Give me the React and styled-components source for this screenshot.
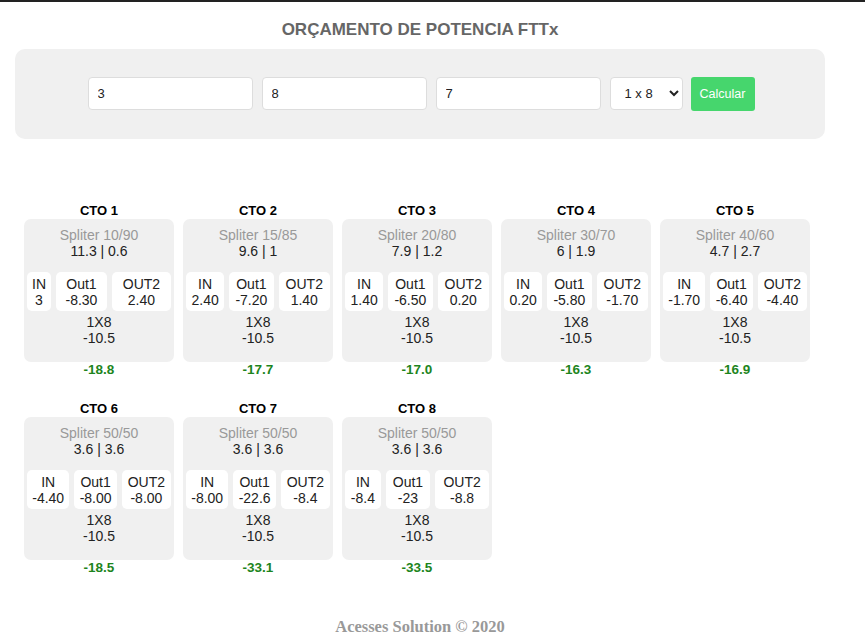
import React from 'react';
import styled, { createGlobalStyle } from 'styled-components';

const GlobalStyle = createGlobalStyle`
  body {
    margin: 0;
    border-top: 2px solid #222;
    background: #fff;
    font-family: "Liberation Sans", Arial, sans-serif;
    color: #222;
  }
`;

const Page = styled.div`
  padding: 0 40px 0 15px;
`;

const Title = styled.h2`
  margin: 0;
  padding: 18px 0 9px;
  font-size: 17px;
  line-height: 20px;
  font-weight: bold;
  color: #666;
  text-align: center;
`;

const Panel = styled.div`
  display: flex;
  justify-content: center;
  gap: 9px;
  padding: 28px 0 28px 2px;
  background: #f0f0f0;
  border-radius: 10px;
`;

const Field = styled.input`
  box-sizing: border-box;
  width: 165px;
  height: 33px;
  padding: 0 9px;
  border: 1px solid #ddd;
  border-radius: 4px;
  background: #fff;
  font-family: "Liberation Sans", Arial, sans-serif;
  font-size: 13px;
  color: #222;
  outline: none;
`;

const Select = styled.select`
  box-sizing: border-box;
  width: 73px;
  height: 33px;
  padding: 0 6px 0 10px;
  border: 1px solid #ddd;
  border-radius: 4px;
  background: #fff;
  font-family: "Liberation Sans", Arial, sans-serif;
  font-size: 13px;
  color: #222;
`;

const Button = styled.button`
  width: 64px;
  height: 34px;
  margin-left: -1px;
  border: none;
  border-radius: 3px;
  background: #46d66d;
  color: #fff;
  font-family: "Liberation Sans", Arial, sans-serif;
  font-size: 12.5px;
  cursor: pointer;
`;

const Grid = styled.div`
  display: flex;
  flex-wrap: wrap;
  gap: 23px 9px;
  margin-top: 64px;
  padding-left: 9px;
`;

const Column = styled.div`
  width: 150px;
  text-align: center;
`;

const CtoName = styled.div`
  font-size: 13px;
  line-height: 16px;
  font-weight: bold;
  color: #000;
`;

const Card = styled.div`
  padding: 8px 0 16px;
  background: #f0f0f0;
  border-radius: 7px;
  font-size: 14px;
  line-height: 16px;
`;

const SplitName = styled.div`
  color: #999;
`;

const Ports = styled.table`
  width: calc(100% + 4px);
  margin: 13px -2px 3px;
  border-collapse: separate;
  border-spacing: 5px 0;
  font-size: 14px;
  line-height: 16px;
`;

const Port = styled.td`
  padding: 4px 1px 3px;
  background: #fff;
  border-radius: 5px;
  text-align: center;
  white-space: nowrap;
`;

const Total = styled.div`
  font-size: 13.5px;
  line-height: 16px;
  font-weight: bold;
  color: #1d851d;
`;

const Footer = styled.footer`
  margin-top: 42px;
  font-family: "Liberation Serif", "Times New Roman", serif;
  font-size: 16.5px;
  line-height: 18px;
  font-weight: bold;
  color: #999;
  text-align: center;
`;

const ctos = [
  { split: '10/90', loss: '11.3 | 0.6', inp: '3', out1: '-8.30', out2: '2.40', total: '-18.8' },
  { split: '15/85', loss: '9.6 | 1', inp: '2.40', out1: '-7.20', out2: '1.40', total: '-17.7' },
  { split: '20/80', loss: '7.9 | 1.2', inp: '1.40', out1: '-6.50', out2: '0.20', total: '-17.0' },
  { split: '30/70', loss: '6 | 1.9', inp: '0.20', out1: '-5.80', out2: '-1.70', total: '-16.3' },
  { split: '40/60', loss: '4.7 | 2.7', inp: '-1.70', out1: '-6.40', out2: '-4.40', total: '-16.9' },
  { split: '50/50', loss: '3.6 | 3.6', inp: '-4.40', out1: '-8.00', out2: '-8.00', total: '-18.5' },
  { split: '50/50', loss: '3.6 | 3.6', inp: '-8.00', out1: '-22.6', out2: '-8.4', total: '-33.1' },
  { split: '50/50', loss: '3.6 | 3.6', inp: '-8.4', out1: '-23', out2: '-8.8', total: '-33.5' },
];

const App = () => {
  return (
    <Page>
      <GlobalStyle />
      <Title>ORÇAMENTO DE POTENCIA FTTx</Title>

      <Panel>
        <Field defaultValue="3" />
        <Field defaultValue="8" />
        <Field defaultValue="7" />
        <Select defaultValue="8">
          <option value="2">1 x 2</option>
          <option value="4">1 x 4</option>
          <option value="8">1 x 8</option>
          <option value="16">1 x 16</option>
        </Select>
        <Button>Calcular</Button>
      </Panel>

      <Grid>
        {ctos.map((cto, i) => (
          <Column key={i}>
            <CtoName>CTO {i + 1}</CtoName>
            <Card>
              <SplitName>Spliter {cto.split}</SplitName>
              <div>{cto.loss}</div>
              <Ports>
                <tbody>
                  <tr>
                    <Port>IN<br />{cto.inp}</Port>
                    <Port>Out1<br />{cto.out1}</Port>
                    <Port>OUT2<br />{cto.out2}</Port>
                  </tr>
                </tbody>
              </Ports>
              <div>1X8</div>
              <div>-10.5</div>
            </Card>
            <Total>{cto.total}</Total>
          </Column>
        ))}
      </Grid>

      <Footer>Acesses Solution © 2020</Footer>
    </Page>
  );
};

export default App;
